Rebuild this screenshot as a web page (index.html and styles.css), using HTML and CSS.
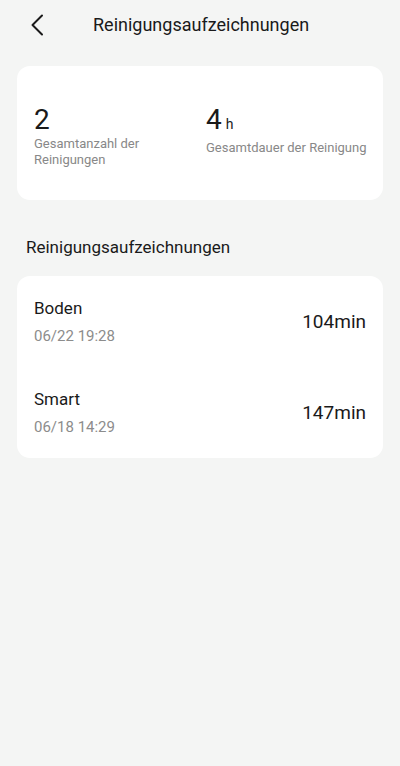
FILE: index.html
```html
<!DOCTYPE html>
<html lang="de">
<head>
<meta charset="utf-8">
<link rel="stylesheet" href="styles.css">
</head>
<body>
<div class="page">
  <header class="header">
    <button class="back" aria-label="Zurück">
      <svg width="14" height="22" viewBox="0 0 14 22"><path d="M12 1.5 L2.5 11 L12 20.5" fill="none" stroke="#1a1a1a" stroke-width="2" stroke-linecap="round" stroke-linejoin="round"/></svg>
    </button>
    <h1 class="title">Reinigungsaufzeichnungen</h1>
  </header>

  <section class="card stats">
    <div class="stat">
      <div class="stat-value">2</div>
      <div class="stat-label">Gesamtanzahl der Reinigungen</div>
    </div>
    <div class="stat">
      <div class="stat-value">4<span class="unit">h</span></div>
      <div class="stat-label">Gesamtdauer der Reinigung</div>
    </div>
  </section>

  <h2 class="section-title">Reinigungsaufzeichnungen</h2>

  <section class="card records">
    <div class="record">
      <div class="record-info">
        <div class="record-name">Boden</div>
        <div class="record-date">06/22 19:28</div>
      </div>
      <div class="record-duration">104min</div>
    </div>
    <div class="record">
      <div class="record-info">
        <div class="record-name">Smart</div>
        <div class="record-date">06/18 14:29</div>
      </div>
      <div class="record-duration">147min</div>
    </div>
  </section>
</div>
</body>
</html>
```
FILE: styles.css
```css
* { box-sizing: border-box; }
html, body {
  margin: 0;
  padding: 0;
  background: #f4f5f4;
}
body {
  font-family: Roboto, "Noto Sans", sans-serif;
  color: #1a1a1a;
  width: 400px;
  height: 766px;
}
.page {
  padding: 0 17px;
}
.header {
  height: 50px;
  display: flex;
  align-items: center;
}
.back {
  border: none;
  background: none;
  padding: 0;
  margin-left: 12px;
  width: 16px;
  height: 24px;
  display: flex;
  align-items: center;
  justify-content: center;
}
.title {
  margin: 0 0 0 48px;
  font-size: 18px;
  font-weight: 400;
  line-height: 24px;
}
.card {
  background: #ffffff;
  border-radius: 13px;
}
.stats {
  margin-top: 16px;
  height: 134px;
  padding: 38px 10px 0 17px;
  display: grid;
  grid-template-columns: 172px 1fr;
}
.stat-value {
  font-size: 28px;
  line-height: 32px;
  display: flex;
  align-items: baseline;
  gap: 4px;
}
.unit {
  font-size: 14px;
}
.stat-label {
  font-size: 13px;
  line-height: 16px;
  color: #888888;
}
.stat:first-child .stat-label {
  padding-right: 30px;
}
.section-title {
  margin: 36px 0 0 9px;
  font-size: 17px;
  font-weight: 400;
  line-height: 22px;
}
.records {
  margin-top: 18px;
  padding: 0 17px;
}
.record {
  height: 91px;
  display: flex;
  align-items: center;
  justify-content: space-between;
}
.record-name {
  font-size: 17px;
  line-height: 22px;
}
.record-date {
  margin-top: 7px;
  font-size: 15px;
  line-height: 20px;
  color: #8c8c8c;
}
.record-duration {
  font-size: 19px;
  line-height: 24px;
}
```
